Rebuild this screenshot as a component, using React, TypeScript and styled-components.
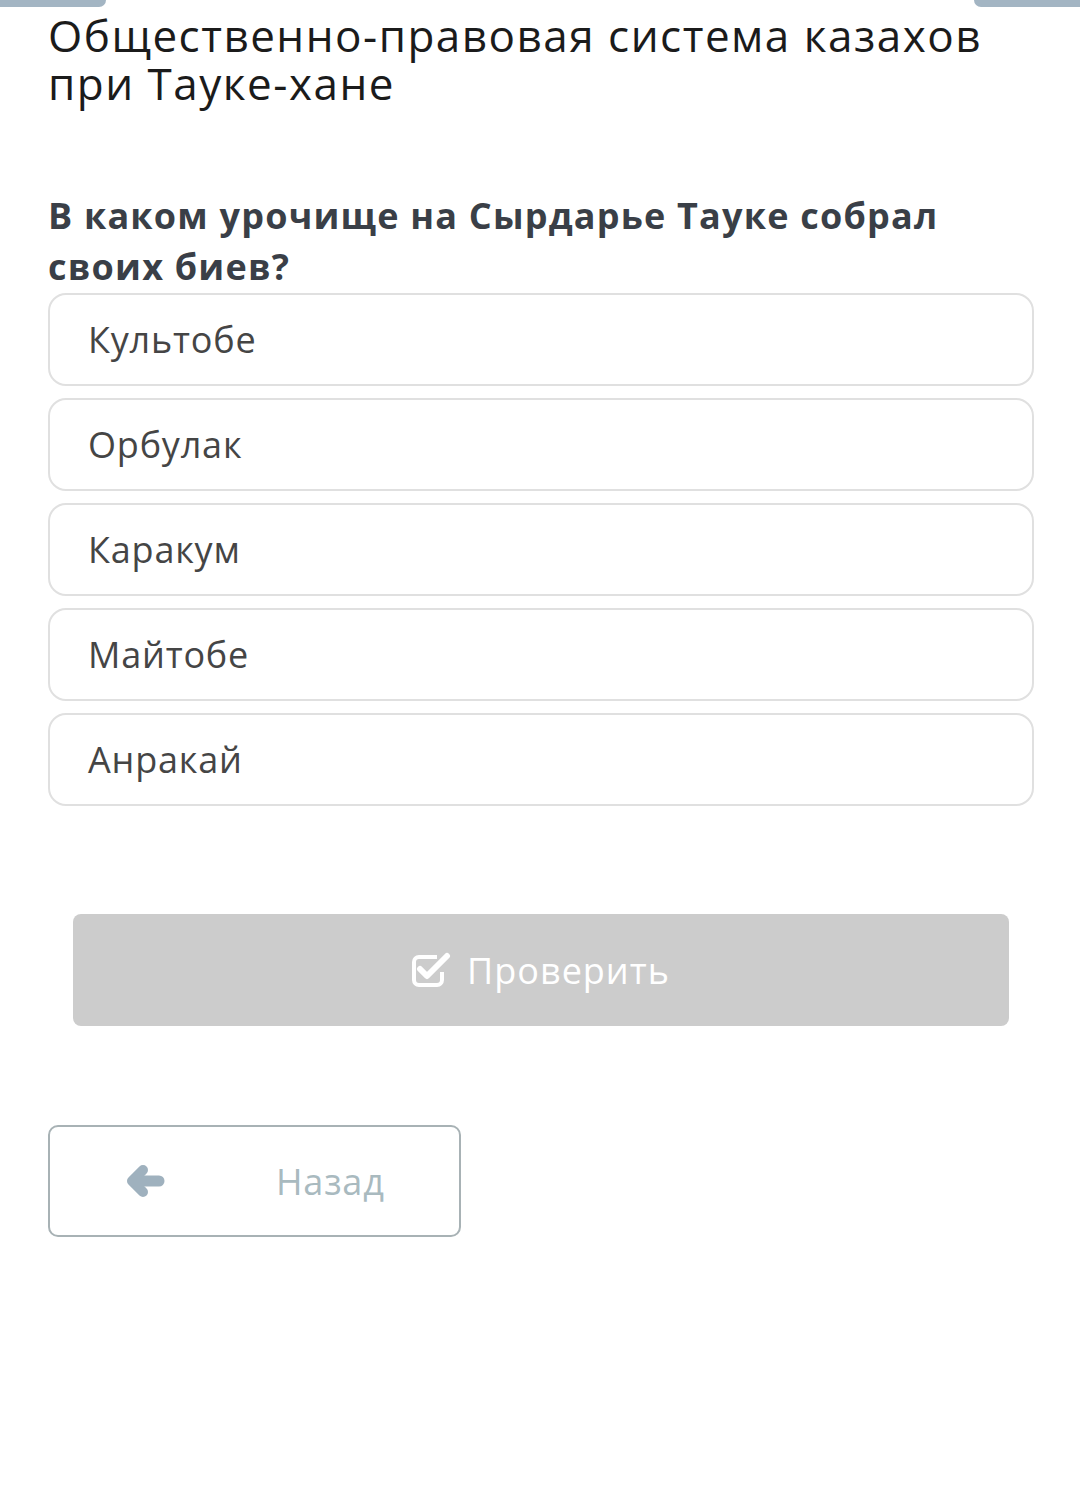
import React from 'react';
import styled, { createGlobalStyle } from 'styled-components';

const GlobalStyle = createGlobalStyle`
  html, body {
    margin: 0;
    padding: 0;
    background: #ffffff;
    font-family: 'Open Sans', 'Noto Sans', sans-serif;
  }
`;

const Page = styled.div`
  width: 1080px;
  min-height: 1508px;
  background: #fff;
`;

const TopTabs = styled.div`
  display: flex;
  justify-content: space-between;
  height: 7px;
`;

const Tab = styled.div<{ side: 'left' | 'right' }>`
  width: 106px;
  height: 7px;
  background: #a3b5c3;
  border-bottom-${(p) => (p.side === 'left' ? 'right' : 'left')}-radius: 8px;
`;

const Content = styled.div`
  padding: 4px 46px 0 48px;
`;

const Title = styled.h1`
  margin: 0;
  font-weight: 400;
  font-size: 44px;
  line-height: 48px;
  letter-spacing: 1.5px;
  color: #1b1b1b;
`;

const Question = styled.h2`
  margin: 83px 0 0;
  font-weight: 700;
  font-size: 36px;
  line-height: 51px;
  letter-spacing: 1.2px;
  color: #3a3f47;
`;

const Options = styled.div`
  display: flex;
  flex-direction: column;
  gap: 12px;
  margin-top: 1px;
`;

const Option = styled.div`
  height: 93px;
  box-sizing: border-box;
  border: 2px solid #e0e0e0;
  border-radius: 18px;
  display: flex;
  align-items: center;
  padding-left: 38px;
  font-size: 36px;
  letter-spacing: 0.8px;
  color: #454545;
`;

const CheckButton = styled.div`
  margin: 108px 25px 0;
  height: 112px;
  border-radius: 8px;
  background: #cccccc;
  display: flex;
  align-items: center;
  justify-content: center;
  gap: 13px;
  color: #ffffff;
  font-size: 36px;
  letter-spacing: 1px;
`;

const BackButton = styled.div`
  margin-top: 99px;
  width: 413px;
  height: 112px;
  box-sizing: border-box;
  border: 2px solid #a8b2b5;
  border-radius: 10px;
  display: flex;
  align-items: center;
  padding-left: 76px;
  color: #a9babf;
  font-size: 36px;
  letter-spacing: 0.8px;
`;

const ArrowWrap = styled.span`
  display: flex;
  margin-right: 110px;
`;

const BackArrow = () => (
  <ArrowWrap>
    <svg width="40" height="32" viewBox="0 0 40 32">
      <g fill="none" stroke="#9fb1be" strokeLinecap="round" strokeLinejoin="round">
        <polyline points="17,5 6,16 17,27" strokeWidth="10" />
        <line x1="8" y1="16" x2="33" y2="16" strokeWidth="11" />
      </g>
    </svg>
  </ArrowWrap>
);

const CheckIcon = () => (
  <svg width="42" height="36" viewBox="0 0 42 36">
    <path
      d="M30 20 V28 A5 5 0 0 1 25 33 H7 A5 5 0 0 1 2 28 V10 A5 5 0 0 1 7 5 H25"
      fill="none"
      stroke="#fff"
      strokeWidth="4"
    />
    <path
      d="M8 17 L15 24 L35 4"
      fill="none"
      stroke="#fff"
      strokeWidth="6"
      strokeLinecap="round"
      strokeLinejoin="round"
    />
  </svg>
);

const answers = ['Культобе', 'Орбулак', 'Каракум', 'Майтобе', 'Анракай'];

const App = () => {
  return (
    <Page>
      <GlobalStyle />
      <TopTabs>
        <Tab side="left" />
        <Tab side="right" />
      </TopTabs>
      <Content>
        <Title>
          Общественно-правовая система казахов
          <br />
          при Тауке-хане
        </Title>
        <Question>В каком урочище на Сырдарье Тауке собрал своих биев?</Question>
        <Options>
          {answers.map((a) => (
            <Option key={a}>{a}</Option>
          ))}
        </Options>
        <CheckButton>
          <CheckIcon />
          Проверить
        </CheckButton>
        <BackButton>
          <BackArrow />
          Назад
        </BackButton>
      </Content>
    </Page>
  );
};

export default App;
